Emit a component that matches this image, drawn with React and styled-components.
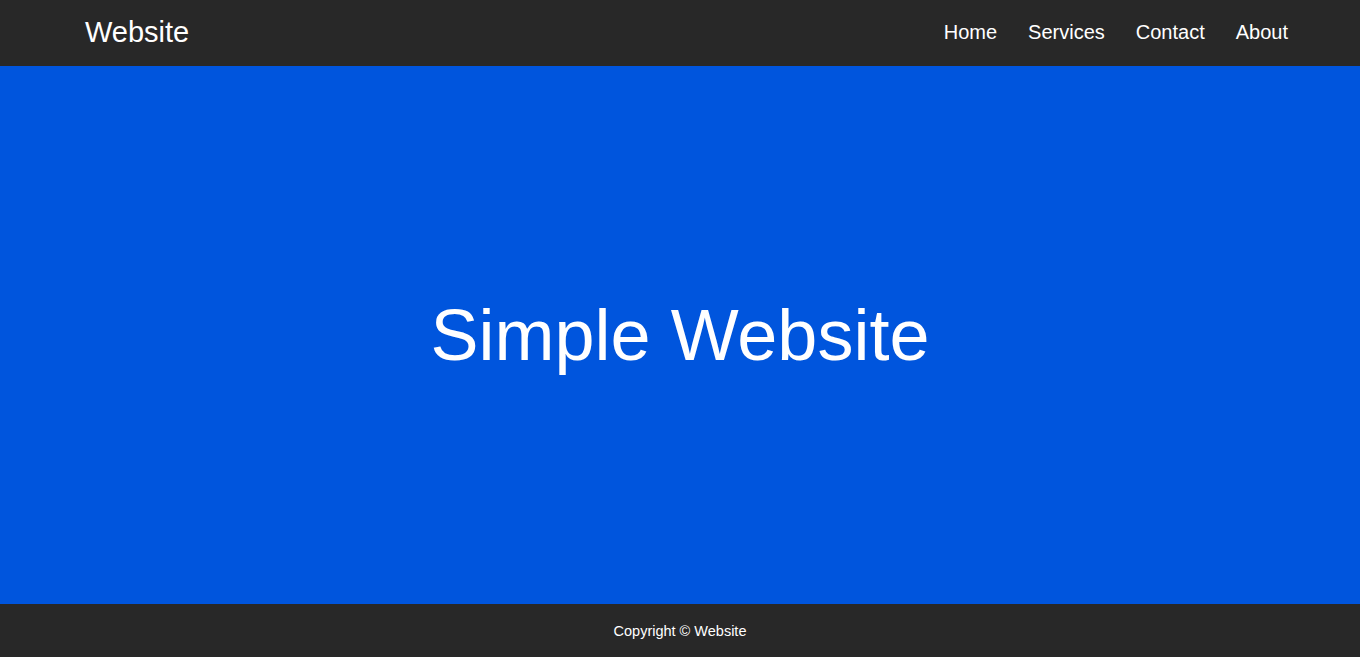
import React from 'react';
import styled, { createGlobalStyle } from 'styled-components';

const Global = createGlobalStyle`
  html, body { margin: 0; padding: 0; }
  body { font-family: "Liberation Sans", Arial, sans-serif; }
`;

const Page = styled.div`
  display: flex;
  flex-direction: column;
  min-height: 100vh;
`;

const Header = styled.header`
  display: flex;
  align-items: center;
  justify-content: space-between;
  height: 66px;
  box-sizing: border-box;
  padding: 0 72px 2px 85px;
  background: #282828;
  color: #fff;
`;

const Logo = styled.div`
  font-size: 29px;
`;

const Nav = styled.nav`
  display: flex;
  gap: 31px;
`;

const NavLink = styled.a`
  color: #fff;
  font-size: 20px;
  text-decoration: none;
`;

const Hero = styled.main`
  flex: 1;
  display: flex;
  align-items: center;
  justify-content: center;
  background: #0055dd;
  color: #fff;
`;

const Title = styled.h1`
  margin: 0;
  font-size: 72px;
  font-weight: normal;
`;

const Footer = styled.footer`
  display: flex;
  align-items: center;
  justify-content: center;
  height: 53px;
  background: #282828;
  color: #fff;
  font-size: 14.5px;
`;

export default function App() {
  return (
    <Page>
      <Global />
      <Header>
        <Logo>Website</Logo>
        <Nav>
          <NavLink href="#">Home</NavLink>
          <NavLink href="#">Services</NavLink>
          <NavLink href="#">Contact</NavLink>
          <NavLink href="#">About</NavLink>
        </Nav>
      </Header>
      <Hero>
        <Title>Simple Website</Title>
      </Hero>
      <Footer>Copyright © Website</Footer>
    </Page>
  );
}
